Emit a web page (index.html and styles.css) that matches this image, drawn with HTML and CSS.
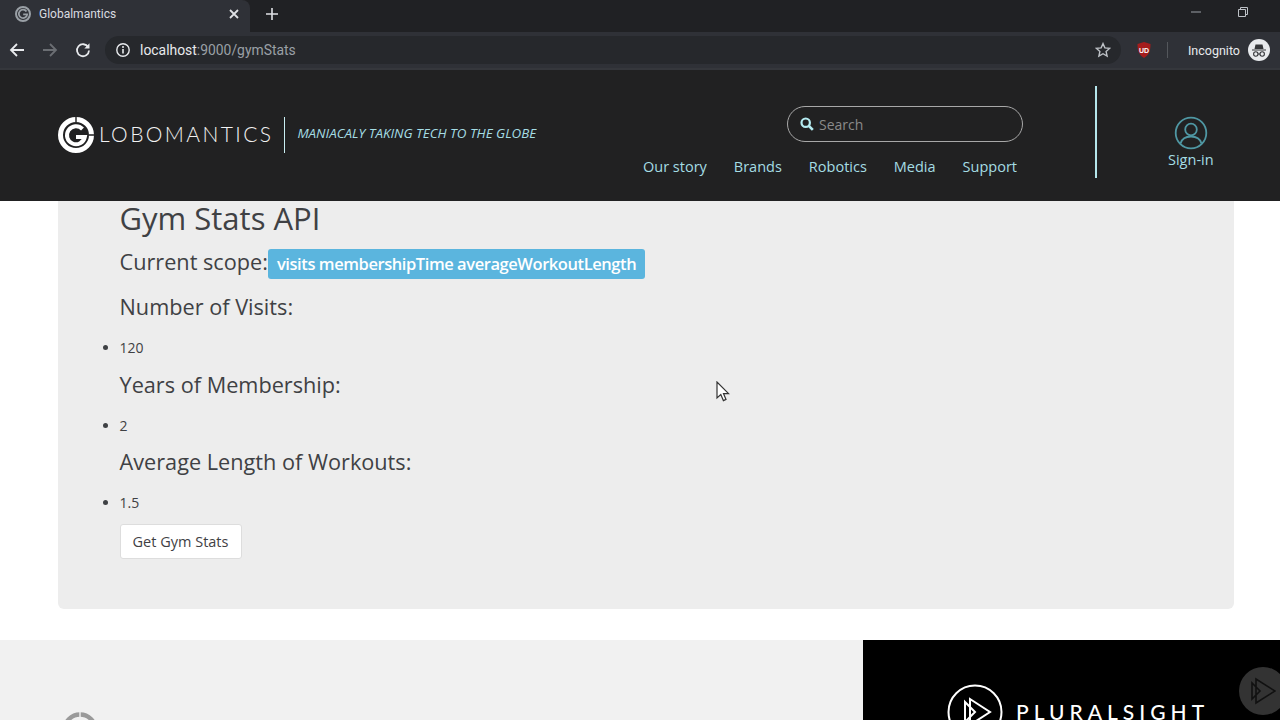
FILE: index.html
```html
<!DOCTYPE html>
<html>
<head>
  <title>Globalmantics</title>
  <link rel="stylesheet" href="styles.css">
</head>
<body>

<!-- browser chrome -->
<div class="tabstrip">
  <div class="tab">
    <svg class="tab-icon" width="16" height="16" viewBox="0 0 16 16"><circle cx="8" cy="8" r="7" fill="none" stroke="#9aa0a6" stroke-width="2"/><path d="M11.5 5.5A4.2 4.2 0 1 0 12.2 8.4H8.2" fill="none" stroke="#9aa0a6" stroke-width="1.8"/></svg>
    <span class="tab-title">Globalmantics</span>
    <svg class="tab-close" width="10" height="10" viewBox="0 0 10 10"><path d="M1 1L9 9M9 1L1 9" stroke="#dfe1e5" stroke-width="1.8"/></svg>
  </div>
  <svg class="new-tab" width="14" height="14" viewBox="0 0 14 14"><path d="M7 1V13M1 7H13" stroke="#dfe1e5" stroke-width="1.6"/></svg>
  <div class="window-btns">
    <svg width="12" height="12" viewBox="0 0 12 12"><path d="M1 6H11" stroke="#9aa0a6" stroke-width="1"/></svg>
    <svg width="12" height="12" viewBox="0 0 12 12"><path d="M1.5 3.5H8.5V10.5H1.5ZM3.5 3.5V1.5H10.5V8.5H8.5" fill="none" stroke="#bdc1c6" stroke-width="1"/></svg>
  </div>
</div>

<div class="toolbar">
  <svg class="nav-icon" width="16" height="16" viewBox="0 0 16 16"><path d="M15 8H2M8 2L2 8L8 14" fill="none" stroke="#e8eaed" stroke-width="1.8"/></svg>
  <svg class="nav-icon" width="16" height="16" viewBox="0 0 16 16"><path d="M1 8H14M8 2L14 8L8 14" fill="none" stroke="#6b6e73" stroke-width="1.8"/></svg>
  <svg class="nav-icon" width="16" height="16" viewBox="0 0 16 16"><path d="M13.2 5.2A6 6 0 1 0 14 8.5" fill="none" stroke="#e8eaed" stroke-width="1.8"/><path d="M14.5 1.2V6.4H9.3Z" fill="#e8eaed"/></svg>
  <div class="omnibox">
    <svg width="16" height="16" viewBox="0 0 16 16"><circle cx="8" cy="8" r="6.2" fill="none" stroke="#e8eaed" stroke-width="1.4"/><path d="M8 7V11.6" stroke="#e8eaed" stroke-width="1.6"/><circle cx="8" cy="4.9" r="1" fill="#e8eaed"/></svg>
    <span class="url"><b>localhost</b>:9000/gymStats</span>
    <svg class="star" width="16" height="16" viewBox="0 0 16 16"><path d="M8 1.6L9.9 5.9L14.6 6.4L11.1 9.5L12.1 14.1L8 11.7L3.9 14.1L4.9 9.5L1.4 6.4L6.1 5.9Z" fill="none" stroke="#bdc1c6" stroke-width="1.4"/></svg>
  </div>
  <svg class="ublock" width="16" height="18" viewBox="0 0 16 18"><path d="M8 1L14.5 3C14.5 10 13 14 8 17C3 14 1.5 10 1.5 3Z" fill="#a51d1d"/><text x="8" y="11.5" class="ublock-text">UD</text></svg>
  <span class="divider"></span>
  <span class="incognito">Incognito</span>
  <svg class="spy" width="22" height="22" viewBox="0 0 22 22"><circle cx="11" cy="11" r="11" fill="#e8eaed"/><path d="M4 10.5H18V11.5H4ZM6.5 10L7.5 5.5H14.5L15.5 10Z" fill="#35363a"/><circle cx="7.8" cy="15" r="2.2" fill="none" stroke="#35363a" stroke-width="1.1"/><circle cx="14.2" cy="15" r="2.2" fill="none" stroke="#35363a" stroke-width="1.1"/><path d="M10 15H12" stroke="#35363a"/></svg>
</div>

<!-- site header -->
<header class="site-header">
  <div class="brand">
    <svg class="brand-mark" width="36" height="36" viewBox="0 0 36 36">
      <circle cx="18" cy="18" r="15.5" fill="none" stroke="#fff" stroke-width="5"/>
      <path d="M24.5 12A9 9 0 1 0 26.8 20H18" fill="none" stroke="#fff" stroke-width="4"/>
      <path d="M18 0V5M31 18H36" stroke="#212122" stroke-width="1.4"/>
    </svg>
    <span class="brand-name">LOBOMANTICS</span>
    <span class="brand-rule"></span>
    <span class="tagline">MANIACALY TAKING TECH TO THE GLOBE</span>
  </div>
  <div class="header-right">
    <div class="search">
      <svg width="14" height="14" viewBox="0 0 14 14"><circle cx="5.7" cy="5.7" r="4.2" fill="none" stroke="#b5ecf2" stroke-width="2.2"/><path d="M8.8 8.8L12.8 12.8" stroke="#b5ecf2" stroke-width="2.6"/></svg>
      <span class="search-text">Search</span>
    </div>
    <nav class="main-nav">
      <a>Our story</a>
      <a>Brands</a>
      <a>Robotics</a>
      <a>Media</a>
      <a>Support</a>
    </nav>
  </div>
  <span class="header-rule"></span>
  <div class="signin">
    <svg width="34" height="34" viewBox="0 0 34 34"><circle cx="17" cy="17" r="15.3" fill="none" stroke="#4f97a3" stroke-width="1.8"/><circle cx="17" cy="13.5" r="5.8" fill="none" stroke="#4f97a3" stroke-width="1.8"/><path d="M6.5 27.5C8 22.5 12 20.5 17 20.5C22 20.5 26 22.5 27.5 27.5" fill="none" stroke="#4f97a3" stroke-width="1.8"/></svg>
    <span>Sign-in</span>
  </div>
</header>

<main class="jumbotron">
  <h2>Gym Stats API</h2>
  <div class="scope-row">
    <span class="stat-title">Current scope:</span>
    <span class="scope-label">visits membershipTime averageWorkoutLength</span>
  </div>
  <h4 class="stat-title first">Number of Visits:</h4>
  <ul><li>120</li></ul>
  <h4 class="stat-title">Years of Membership:</h4>
  <ul><li>2</li></ul>
  <h4 class="stat-title">Average Length of Workouts:</h4>
  <ul class="last-list"><li>1.5</li></ul>
  <button class="stats-btn">Get Gym Stats</button>
</main>

<footer class="site-footer">
  <div class="footer-left">
    <svg class="footer-mark" width="36" height="36" viewBox="0 0 36 36"><circle cx="18" cy="18" r="15.5" fill="none" stroke="#9a9a9a" stroke-width="4.4"/><path d="M18 0V5" stroke="#f1f1f1" stroke-width="1.4"/></svg>
  </div>
  <div class="footer-right">
    <svg class="ps-mark" width="56" height="56" viewBox="0 0 56 56"><circle cx="28" cy="28" r="26.5" fill="none" stroke="#fff" stroke-width="2"/><path d="M18 18V38L28 28ZM23 15V41L43 28Z" fill="none" stroke="#fff" stroke-width="2"/></svg>
    <span class="ps-name">PLURALSIGHT</span>
  </div>
</footer>

<!-- overlays -->
<div class="play-btn">
  <svg width="26" height="28" viewBox="0 0 26 28"><path d="M2 6V22L10 14ZM6 2V26L25 14Z" fill="none" stroke="#111" stroke-width="1.6"/></svg>
</div>
<svg class="cursor" width="14" height="21" viewBox="0 0 14 21"><path d="M1 1V17L4.8 13.6L7.4 19.6L10 18.4L7.5 12.6H12.6Z" fill="#fff" stroke="#333" stroke-width="1.2"/></svg>

</body>
</html>
```

FILE: styles.css
```css
html, body {
  margin: 0;
  height: 720px;
  overflow: hidden;
  background-color: #fff;
  font-family: "Open Sans", sans-serif;
  color: #3f4144;
}

/* Browser chrome */
.tabstrip {
  display: flex;
  align-items: center;
  height: 32px;
  background-color: #202124;
}

.tab {
  display: flex;
  align-items: center;
  width: 250px;
  height: 32px;
  box-sizing: border-box;
  padding: 0 11px 4px 15px;
  background-color: #2f3137;
  border-radius: 0 8px 0 0;
}

.tab-title {
  flex: 1;
  margin-left: 8px;
  font-family: "Roboto", sans-serif;
  font-size: 12px;
  color: #dadce0;
}

.new-tab {
  margin: -4px 0 0 15px;
}

.window-btns {
  display: flex;
  gap: 35px;
  margin: -8px 31px 0 auto;
}

.toolbar {
  display: flex;
  align-items: center;
  height: 36px;
  padding-right: 10px;
  background-color: #2f3137;
  border-bottom: 2px solid #35373c;
}

.nav-icon {
  margin-left: 9px;
  margin-right: 8px;
}

.omnibox {
  display: flex;
  align-items: center;
  flex: 1;
  height: 28px;
  margin: 0 0 0 6px;
  padding: 0 10px 0 10px;
  background-color: #26282c;
  border-radius: 14px;
}

.url {
  flex: 1;
  margin-left: 9px;
  font-family: "Roboto", sans-serif;
  font-size: 13.9px;
  color: #9aa0a6;
}

.url b {
  font-weight: 400;
  color: #e8eaed;
}

.ublock {
  margin-left: 15px;
}

.ublock-text {
  font-family: "Liberation Sans", sans-serif;
  font-size: 7px;
  font-weight: 700;
  fill: #fff;
  text-anchor: middle;
}

.divider {
  width: 1px;
  height: 16px;
  margin: 0 20px 0 15px;
  background-color: #54575c;
}

.incognito {
  font-family: "Roboto", sans-serif;
  font-size: 12.5px;
  color: #e8eaed;
}

.spy {
  margin-left: 8px;
}

/* Site header */
.site-header {
  display: flex;
  height: 131px;
  background-color: #212122;
}

.brand {
  display: flex;
  align-items: center;
  height: 36px;
  margin: 47px 0 0 58px;
  width: 560px;
}

.brand-name {
  margin: -4px 0 0 5px;
  font-family: "Lato", sans-serif;
  font-weight: 300;
  font-size: 21px;
  letter-spacing: 2.4px;
  color: #f2f2f2;
}

.brand-rule {
  width: 1px;
  height: 36px;
  margin: 0 13px 0 11px;
  background-color: #c9eef2;
}

.tagline {
  margin: -5px 0 0 -1px;
  font-size: 13.4px;
  font-style: italic;
  color: #a5dde4;
}

.header-right {
  display: flex;
  flex-direction: column;
  align-items: flex-end;
  width: 398px;
  margin-top: 36px;
  margin-left: 7px;
}

.search {
  display: flex;
  align-items: center;
  box-sizing: border-box;
  width: 236px;
  height: 36px;
  padding: 0 12px;
  border: 1px solid #a8a8a8;
  border-radius: 18px;
}

.search-text {
  margin-left: 5px;
  font-size: 14px;
  color: #8a8a8a;
}

.main-nav {
  display: flex;
  gap: 27px;
  margin: 15px 6px 0 0;
  font-size: 14.5px;
  color: #a5dde4;
}

.header-rule {
  width: 2px;
  height: 92px;
  margin: 16px 0 0 72px;
  background-color: #b5e6ec;
}

.signin {
  display: flex;
  flex-direction: column;
  align-items: center;
  margin: 46px 0 0 71px;
  font-size: 14.5px;
  color: #a5dde4;
}

/* Main panel */
.jumbotron {
  box-sizing: border-box;
  height: 408px;
  margin: 0 46px 0 58px;
  padding-left: 61.5px;
  background-color: #ededed;
  border-radius: 0 0 6px 6px;
}

.jumbotron h2 {
  margin: 0;
  font-size: 31px;
  font-weight: 400;
  line-height: 35px;
}

.stat-title {
  margin: 0;
  font-size: 21.7px;
  font-weight: 400;
  line-height: 28px;
}

.scope-row {
  display: flex;
  align-items: flex-start;
  margin-top: 12px;
}

.scope-label {
  padding: 0 9px;
  margin-top: 1px;
  font-size: 16.5px;
  font-weight: 600;
  line-height: 30px;
  letter-spacing: -0.43px;
  color: #fff;
  background-color: #5bb5de;
  border-radius: 3px;
}

h4.first {
  margin-top: 14px;
}

.jumbotron ul {
  margin: 17px 0 12.5px;
  padding: 0;
  font-size: 14px;
  line-height: 20px;
}

.jumbotron ul.last-list {
  margin-bottom: 11px;
}

.stats-btn {
  display: block;
  box-sizing: border-box;
  width: 122px;
  height: 35px;
  padding: 0;
  font-family: "Open Sans", sans-serif;
  font-size: 14.5px;
  color: #3f4144;
  background-color: #fff;
  border: 1px solid #ddd;
  border-radius: 3px;
}

/* Footer */
.site-footer {
  display: flex;
  height: 80px;
  margin-top: 31px;
}

.footer-left {
  width: 863px;
  padding: 72px 0 0 62px;
  box-sizing: border-box;
  background-color: #f1f1f1;
}

.footer-mark {
  display: block;
}

.footer-right {
  display: flex;
  flex: 1;
  align-items: flex-start;
  padding: 44px 0 0 84px;
  background-color: #000;
}

.ps-name {
  margin: 15px 0 0 13px;
  font-family: "Lato", sans-serif;
  font-size: 21px;
  font-weight: 500;
  letter-spacing: 5px;
  color: #fff;
}

/* Overlays */
.play-btn {
  position: absolute;
  left: 1239px;
  top: 667px;
  display: flex;
  align-items: center;
  justify-content: center;
  width: 48px;
  height: 48px;
  background-color: #333;
  border-radius: 50%;
}

.cursor {
  position: absolute;
  left: 716px;
  top: 381px;
}
```
